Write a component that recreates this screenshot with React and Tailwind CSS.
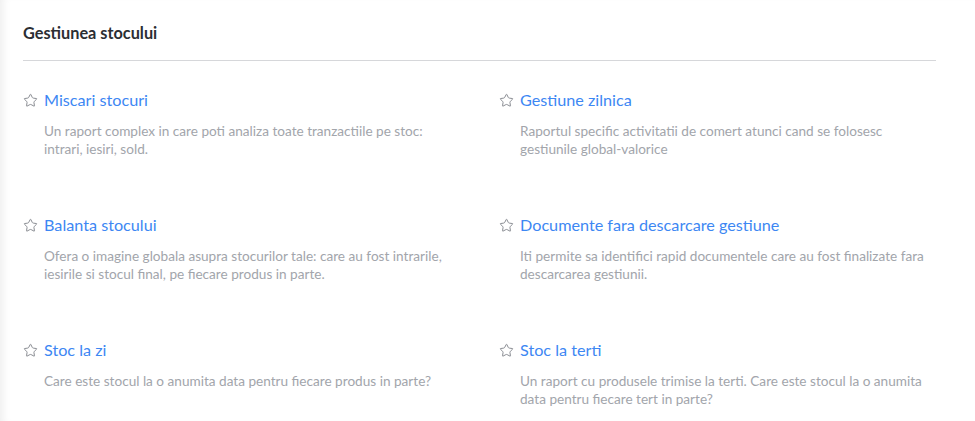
import React from 'react';
import { Star } from 'lucide-react';

const reports = [
  {
    title: 'Miscari stocuri',
    text: 'Un raport complex in care poti analiza toate tranzactiile pe stoc: intrari, iesiri, sold.',
  },
  {
    title: 'Gestiune zilnica',
    text: 'Raportul specific activitatii de comert atunci cand se folosesc gestiunile global-valorice',
  },
  {
    title: 'Balanta stocului',
    text: 'Ofera o imagine globala asupra stocurilor tale: care au fost intrarile, iesirile si stocul final, pe fiecare produs in parte.',
  },
  {
    title: 'Documente fara descarcare gestiune',
    text: 'Iti permite sa identifici rapid documentele care au fost finalizate fara descarcarea gestiunii.',
  },
  {
    title: 'Stoc la zi',
    text: 'Care este stocul la o anumita data pentru fiecare produs in parte?',
  },
  {
    title: 'Stoc la terti',
    text: 'Un raport cu produsele trimise la terti. Care este stocul la o anumita data pentru fiecare tert in parte?',
  },
];

const ReportItem = ({ title, text }) => (
  <div>
    <div className="flex items-center gap-[6px] h-5">
      <Star className="w-[15px] h-[15px] text-[#8a8d93] shrink-0" strokeWidth={1.6} />
      <a href="#" className="text-[16.2px] leading-5 text-[#3d87f3]">
        {title}
      </a>
    </div>
    <p className="mt-[12px] pl-[21px] text-[13.6px] leading-[18px] text-[#a2a5ab]">{text}</p>
  </div>
);

const App = () => {
  return (
    <div
      className="min-h-[421px] bg-white pl-[23px] pr-[39px] pt-[23px] shadow-[inset_9px_0_8px_-6px_rgba(0,0,0,0.07)]"
      style={{ fontFamily: 'Lato, "Open Sans", sans-serif' }}
    >
      <h2 className="text-[16.3px] leading-5 font-bold text-[#2b2e33]">Gestiunea stocului</h2>
      <div className="mt-[17px] h-px bg-[#d6d7da]" />

      <div className="mt-[29px] grid grid-cols-2 gap-x-[39px] gap-y-[57px]">
        {reports.map((r) => (
          <ReportItem key={r.title} title={r.title} text={r.text} />
        ))}
      </div>
    </div>
  );
};

export default App;
